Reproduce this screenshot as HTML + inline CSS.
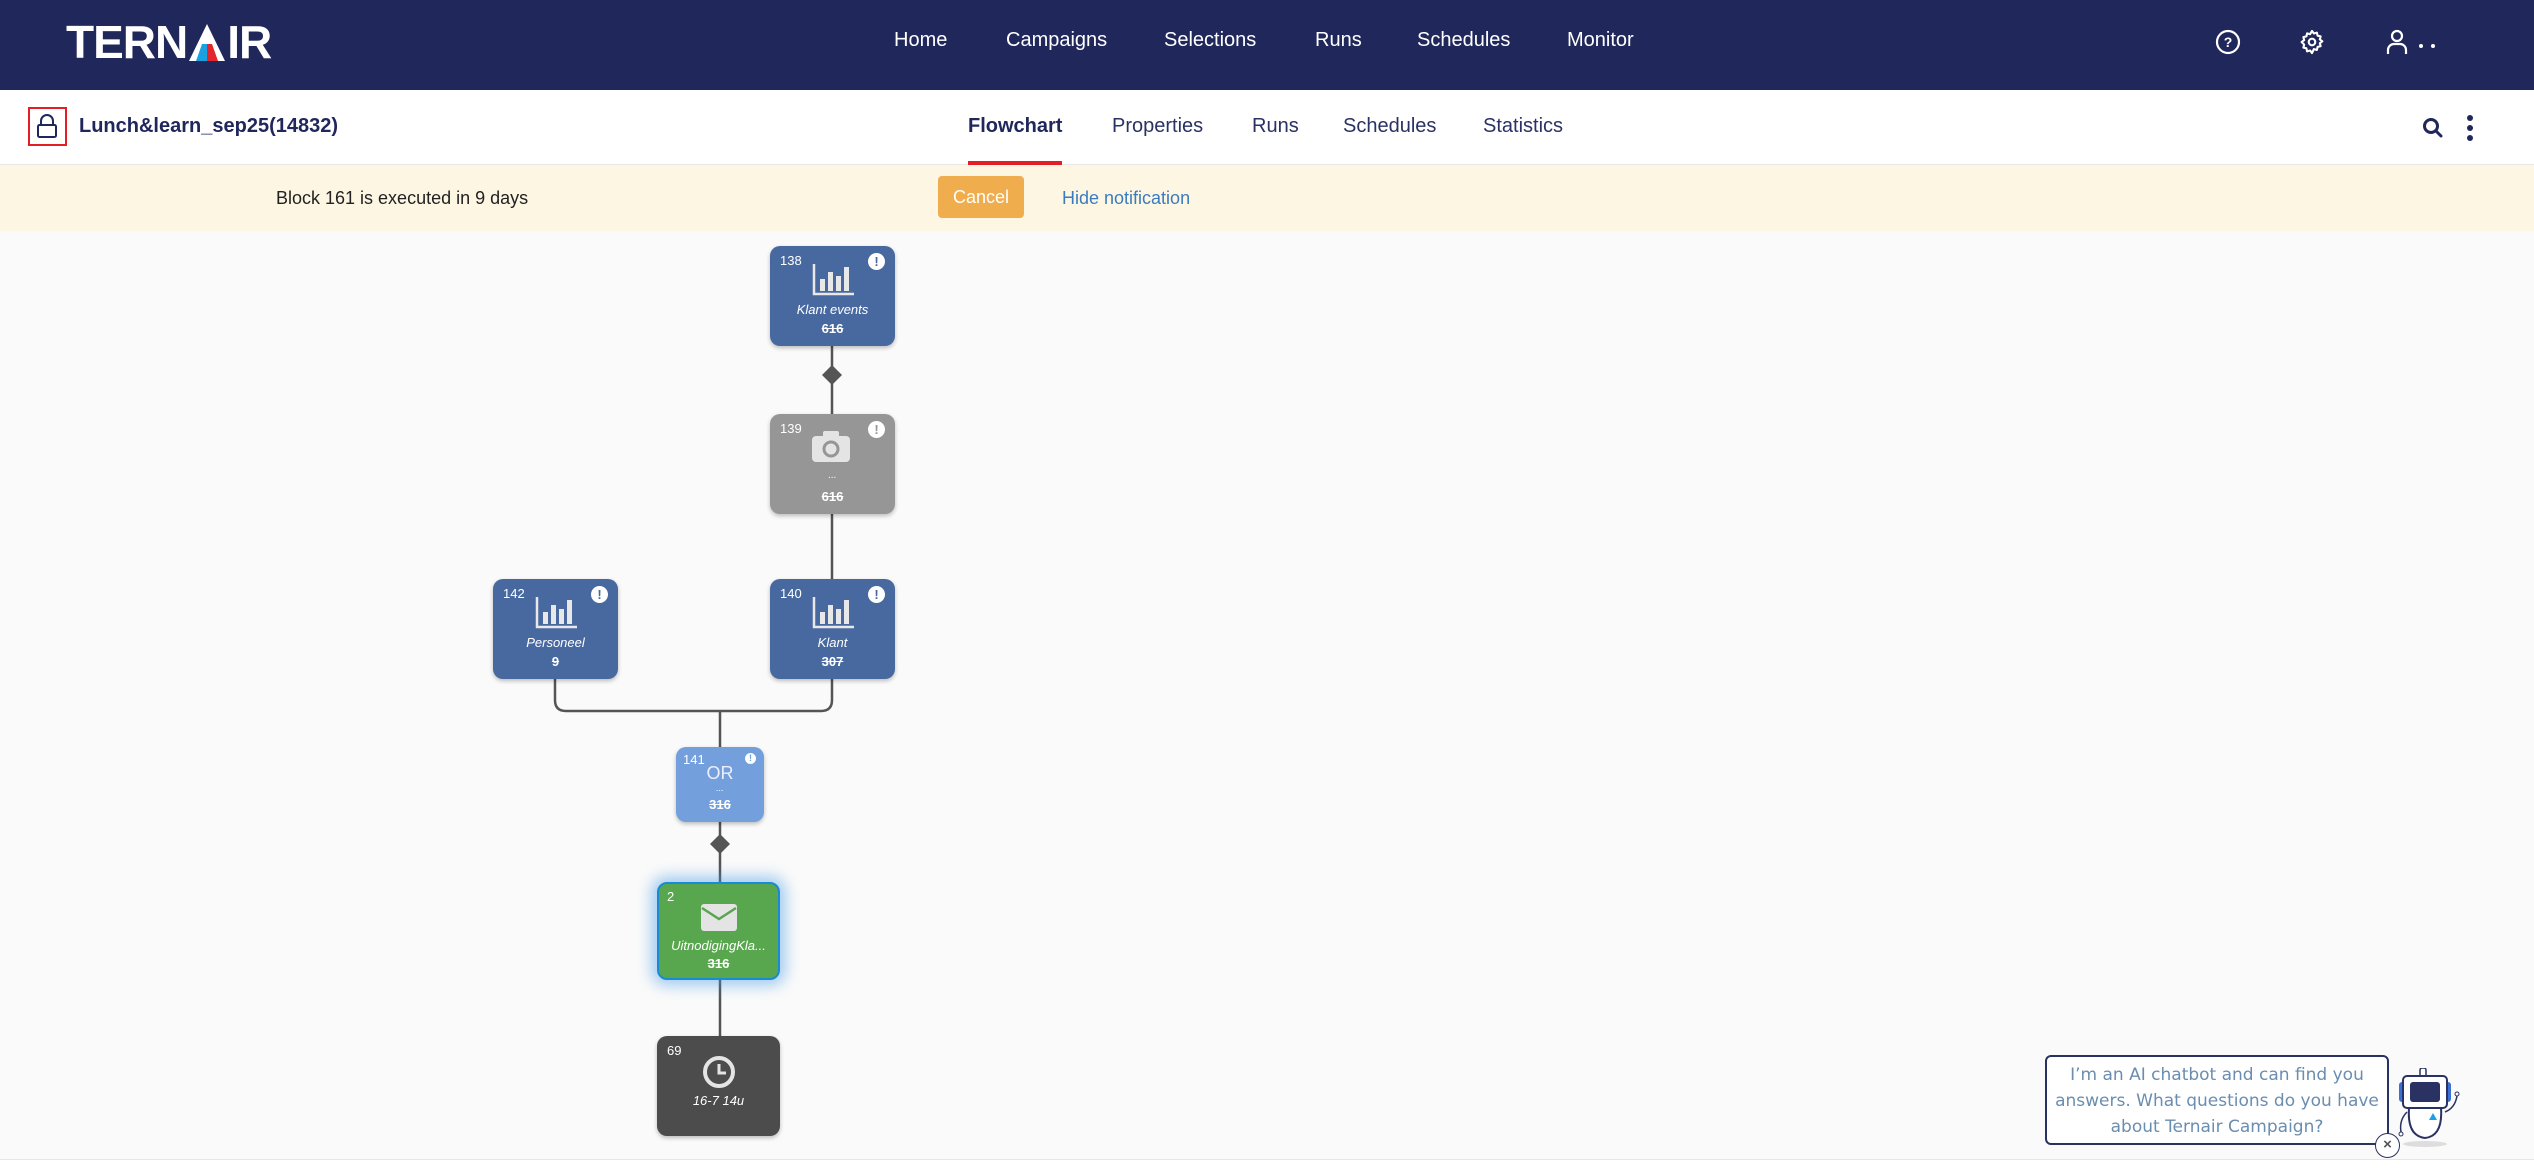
<!DOCTYPE html>
<html><head><meta charset="utf-8"><style>
*{margin:0;padding:0;box-sizing:border-box}
body{width:2534px;height:1171px;position:relative;background:#fff;font-family:"Liberation Sans",sans-serif;overflow:hidden}
.a{position:absolute}
.hdr{left:0;top:0;width:2534px;height:90px;background:#20275b}
.nav{color:#fff;font-size:20px;top:29px}
.sub{left:0;top:90px;width:2534px;height:75px;background:#fff;border-bottom:1px solid #e8e8e8}
.tab{color:#2a3163;font-size:20px;top:115px}
.note{left:0;top:165px;width:2534px;height:66px;background:#fdf6e3}
.canvas{left:0;top:231px;width:2534px;height:929px;background:#fafafa;border-bottom:1px solid #e6e6e6}
.node{position:absolute;border-radius:10px;color:#fff;box-shadow:0 2px 4px rgba(0,0,0,.25);text-align:center}
.num{position:absolute;left:10px;top:7px;font-size:13px}
.lbl{position:absolute;left:0;right:0;font-size:13px;font-style:italic}
.cnt{position:absolute;left:0;right:0;font-size:13px;text-decoration:line-through;font-weight:bold}
.ex{position:absolute;right:10px;top:7px;width:17px;height:17px;border-radius:50%;background:#fff;font-size:13px;font-weight:bold;line-height:17px;text-align:center}
.logo{display:flex;align-items:flex-end;left:66px;top:24px;height:37px;color:#fff;font-size:46px;font-weight:bold;line-height:37px;letter-spacing:-1px}
</style></head><body>
<div class="a hdr"></div>
<div class="a logo"><span>TERN</span><svg width="36" height="37" style="margin:0 2px 0 2px"><polygon points="18,0 36,37 0,37" fill="#fff"/><polygon points="13,20 18,20 18,37 7,37" fill="#1ba1e2"/><polygon points="18,20 23,20 29,37 18,37" fill="#e3262e"/></svg><span>IR</span></div>
<div class="a nav" style="left:894px">Home</div>
<div class="a nav" style="left:1006px">Campaigns</div>
<div class="a nav" style="left:1164px">Selections</div>
<div class="a nav" style="left:1315px">Runs</div>
<div class="a nav" style="left:1417px">Schedules</div>
<div class="a nav" style="left:1567px">Monitor</div>
<svg class="a" style="left:2214px;top:28px" width="28" height="28"><circle cx="14" cy="14" r="11" fill="none" stroke="#fff" stroke-width="2.2"/><text x="14" y="19" font-size="14" font-weight="bold" fill="#fff" text-anchor="middle" font-family="Liberation Sans">?</text></svg>
<svg class="a" style="left:2298px;top:28px" width="28" height="28" viewBox="0 0 24 24"><path d="M12 2.5l1.6 2.2 2.6-.7.6 2.6 2.6.6-.7 2.6 2.2 1.6-2.2 1.6.7 2.6-2.6.6-.6 2.6-2.6-.7L12 21.5l-1.6-2.2-2.6.7-.6-2.6-2.6-.6.7-2.6L3.1 12l2.2-1.6-.7-2.6 2.6-.6.6-2.6 2.6.7z" fill="none" stroke="#fff" stroke-width="1.8" stroke-linejoin="round"/><circle cx="12" cy="12" r="2.8" fill="none" stroke="#fff" stroke-width="1.8"/></svg>
<svg class="a" style="left:2385px;top:28px" width="26" height="28"><circle cx="12" cy="8" r="5" fill="none" stroke="#fff" stroke-width="2.2"/><path d="M3 26v-4a6 6 0 0 1 6-6h6a6 6 0 0 1 6 6v4" fill="none" stroke="#fff" stroke-width="2.2"/></svg>
<div class="a" style="left:2419px;top:44px;width:4px;height:4px;border-radius:2px;background:#fff"></div>
<div class="a" style="left:2431px;top:44px;width:4px;height:4px;border-radius:2px;background:#fff"></div>

<div class="a sub"></div>
<div class="a" style="left:28px;top:107px;width:39px;height:39px;border:2px solid #e31e24"></div>
<svg class="a" style="left:36px;top:113px" width="22" height="26"><path d="M5 12V8a6 6 0 0 1 12 0v4" fill="none" stroke="#20275b" stroke-width="2"/><rect x="2" y="12" width="18" height="12" rx="1.5" fill="none" stroke="#20275b" stroke-width="2"/></svg>
<div class="a" style="left:79px;top:115px;color:#20275b;font-size:20px;font-weight:bold">Lunch&amp;learn_sep25(14832)</div>
<div class="a tab" style="left:968px;font-weight:bold;color:#20275b">Flowchart</div>
<div class="a" style="left:968px;top:161px;width:94px;height:4px;background:#e31e24"></div>
<div class="a tab" style="left:1112px">Properties</div>
<div class="a tab" style="left:1252px">Runs</div>
<div class="a tab" style="left:1343px">Schedules</div>
<div class="a tab" style="left:1483px">Statistics</div>
<svg class="a" style="left:2421px;top:116px" width="24" height="24"><circle cx="10" cy="10" r="6.5" fill="none" stroke="#20275b" stroke-width="3"/><path d="M15 15l5 5" stroke="#20275b" stroke-width="3" stroke-linecap="round"/></svg>
<div class="a" style="left:2467px;top:115px;width:6px;height:6px;border-radius:3px;background:#20275b"></div>
<div class="a" style="left:2467px;top:125px;width:6px;height:6px;border-radius:3px;background:#20275b"></div>
<div class="a" style="left:2467px;top:135px;width:6px;height:6px;border-radius:3px;background:#20275b"></div>

<div class="a note"></div>
<div class="a" style="left:276px;top:188px;font-size:18px;color:#222">Block 161 is executed in 9 days</div>
<div class="a" style="left:938px;top:176px;width:86px;height:42px;background:#f0ad4e;border-radius:4px;color:#fff;font-size:18px;line-height:42px;text-align:center">Cancel</div>
<div class="a" style="left:1062px;top:188px;font-size:18px;color:#3b7bbf">Hide notification</div>

<div class="a canvas"></div>
<svg class="a" style="left:0;top:0" width="2534" height="1171">
<g stroke="#555" stroke-width="2.5" fill="none">
<path d="M832 346V414M832 514V579M555 679V700q0 11 11 11H821q11 0 11-11V679M720 711V747M720 822V882M720 980V1036"/>
</g>
<polygon points="832,365 842,375 832,385 822,375" fill="#555"/>
<polygon points="720,834 730,844 720,854 710,844" fill="#555"/>
</svg>

<div class="node" style="left:770px;top:246px;width:125px;height:100px;background:#48699f"><span class="num">138</span><span class="ex" style="color:#48699f">!</span>
<svg class="a" style="left:42px;top:18px" width="42" height="32"><path d="M2 0v30h40" fill="none" stroke="#e8e8e8" stroke-width="2.5"/><rect x="8" y="15" width="5" height="12" fill="#e8e8e8"/><rect x="16" y="8" width="5" height="19" fill="#e8e8e8"/><rect x="24" y="12" width="5" height="15" fill="#e8e8e8"/><rect x="32" y="3" width="5" height="24" fill="#e8e8e8"/></svg>
<span class="lbl" style="top:56px">Klant events</span><span class="cnt" style="top:75px">616</span></div>

<div class="node" style="left:770px;top:414px;width:125px;height:100px;background:#969696"><span class="num">139</span><span class="ex" style="color:#969696">!</span>
<svg class="a" style="left:42px;top:15px" width="40" height="35"><rect x="0" y="7" width="38" height="26" rx="4" fill="#e4e4e4"/><rect x="11" y="2" width="16" height="8" rx="2" fill="#e4e4e4"/><circle cx="19" cy="20" r="7" fill="none" stroke="#969696" stroke-width="3"/></svg>
<span class="lbl" style="top:56px;font-size:10px">...</span><span class="cnt" style="top:75px">616</span></div>

<div class="node" style="left:493px;top:579px;width:125px;height:100px;background:#48699f"><span class="num">142</span><span class="ex" style="color:#48699f">!</span>
<svg class="a" style="left:42px;top:18px" width="42" height="32"><path d="M2 0v30h40" fill="none" stroke="#e8e8e8" stroke-width="2.5"/><rect x="8" y="15" width="5" height="12" fill="#e8e8e8"/><rect x="16" y="8" width="5" height="19" fill="#e8e8e8"/><rect x="24" y="12" width="5" height="15" fill="#e8e8e8"/><rect x="32" y="3" width="5" height="24" fill="#e8e8e8"/></svg>
<span class="lbl" style="top:56px">Personeel</span><span class="cnt" style="top:75px">9</span></div>

<div class="node" style="left:770px;top:579px;width:125px;height:100px;background:#48699f"><span class="num">140</span><span class="ex" style="color:#48699f">!</span>
<svg class="a" style="left:42px;top:18px" width="42" height="32"><path d="M2 0v30h40" fill="none" stroke="#e8e8e8" stroke-width="2.5"/><rect x="8" y="15" width="5" height="12" fill="#e8e8e8"/><rect x="16" y="8" width="5" height="19" fill="#e8e8e8"/><rect x="24" y="12" width="5" height="15" fill="#e8e8e8"/><rect x="32" y="3" width="5" height="24" fill="#e8e8e8"/></svg>
<span class="lbl" style="top:56px">Klant</span><span class="cnt" style="top:75px">307</span></div>

<div class="node" style="left:676px;top:747px;width:88px;height:75px;background:#739fdd"><span class="num" style="left:7px;top:5px">141</span><span class="ex" style="width:11px;height:11px;line-height:11px;font-size:9px;right:8px;top:6px;color:#739fdd">!</span>
<span class="lbl" style="top:16px;font-style:normal;font-size:18px;color:#eef">OR</span><span class="lbl" style="top:36px;font-size:9px">...</span><span class="cnt" style="top:50px">316</span></div>

<div class="node" style="left:657px;top:882px;width:123px;height:98px;background:#58a74e;border:2px solid #1a8ad4;box-shadow:0 0 14px 6px rgba(60,150,230,.45)"><span class="num" style="left:8px;top:5px">2</span>
<svg class="a" style="left:42px;top:20px" width="38" height="28"><rect x="0" y="0" width="36" height="27" rx="3" fill="#e4e4e4"/><path d="M1 4l17 11 17-11" fill="none" stroke="#58a74e" stroke-width="2.5"/></svg>
<span class="lbl" style="top:54px">UitnodigingKla...</span><span class="cnt" style="top:72px">316</span></div>

<div class="node" style="left:657px;top:1036px;width:123px;height:100px;background:#4c4c4c"><span class="num">69</span>
<svg class="a" style="left:45px;top:19px" width="34" height="34"><circle cx="17" cy="17" r="14" fill="none" stroke="#e4e4e4" stroke-width="4"/><path d="M17 9v9h7" fill="none" stroke="#e4e4e4" stroke-width="3"/></svg>
<span class="lbl" style="top:57px">16-7 14u</span></div>

<div class="a" style="left:2045px;top:1055px;width:344px;height:90px;background:#fff;border:2px solid #2a3163;border-radius:6px;color:#6a8db0;font-size:17px;line-height:26px;text-align:center;padding-top:5px;font-family:'DejaVu Sans',sans-serif">I’m an AI chatbot and can find you answers. What questions do you have about Ternair Campaign?</div>
<div class="a" style="left:2375px;top:1133px;width:25px;height:25px;border-radius:50%;background:#fff;border:1.5px solid #2a3163;color:#555;font-size:15px;font-weight:bold;text-align:center;line-height:22px">×</div>
<svg class="a" style="left:2395px;top:1068px" width="70" height="80">
<ellipse cx="30" cy="76" rx="22" ry="3" fill="#ddd"/>
<rect x="25" y="0" width="6" height="9" rx="2" fill="#fff" stroke="#2a3163" stroke-width="1.5"/>
<rect x="4" y="14" width="8" height="20" rx="3" fill="#3b6fd6"/><rect x="48" y="14" width="8" height="20" rx="3" fill="#3b6fd6"/>
<rect x="8" y="8" width="44" height="32" rx="4" fill="#fff" stroke="#2a3163" stroke-width="2"/>
<rect x="15" y="14" width="30" height="20" rx="3" fill="#2a3163"/>
<path d="M14 40q-2 28 16 30q18-2 16-30z" fill="#fff" stroke="#2a3163" stroke-width="2"/>
<path d="M12 44q-8 8-6 20" fill="none" stroke="#2a3163" stroke-width="1.5"/><circle cx="6" cy="66" r="2" fill="none" stroke="#2a3163"/>
<path d="M50 44q10-4 12-16" fill="none" stroke="#2a3163" stroke-width="1.5"/><circle cx="62" cy="26" r="2" fill="none" stroke="#2a3163"/>
<polygon points="38,45 42,52 34,52" fill="#1ba1e2"/>
</svg>
</body></html>
